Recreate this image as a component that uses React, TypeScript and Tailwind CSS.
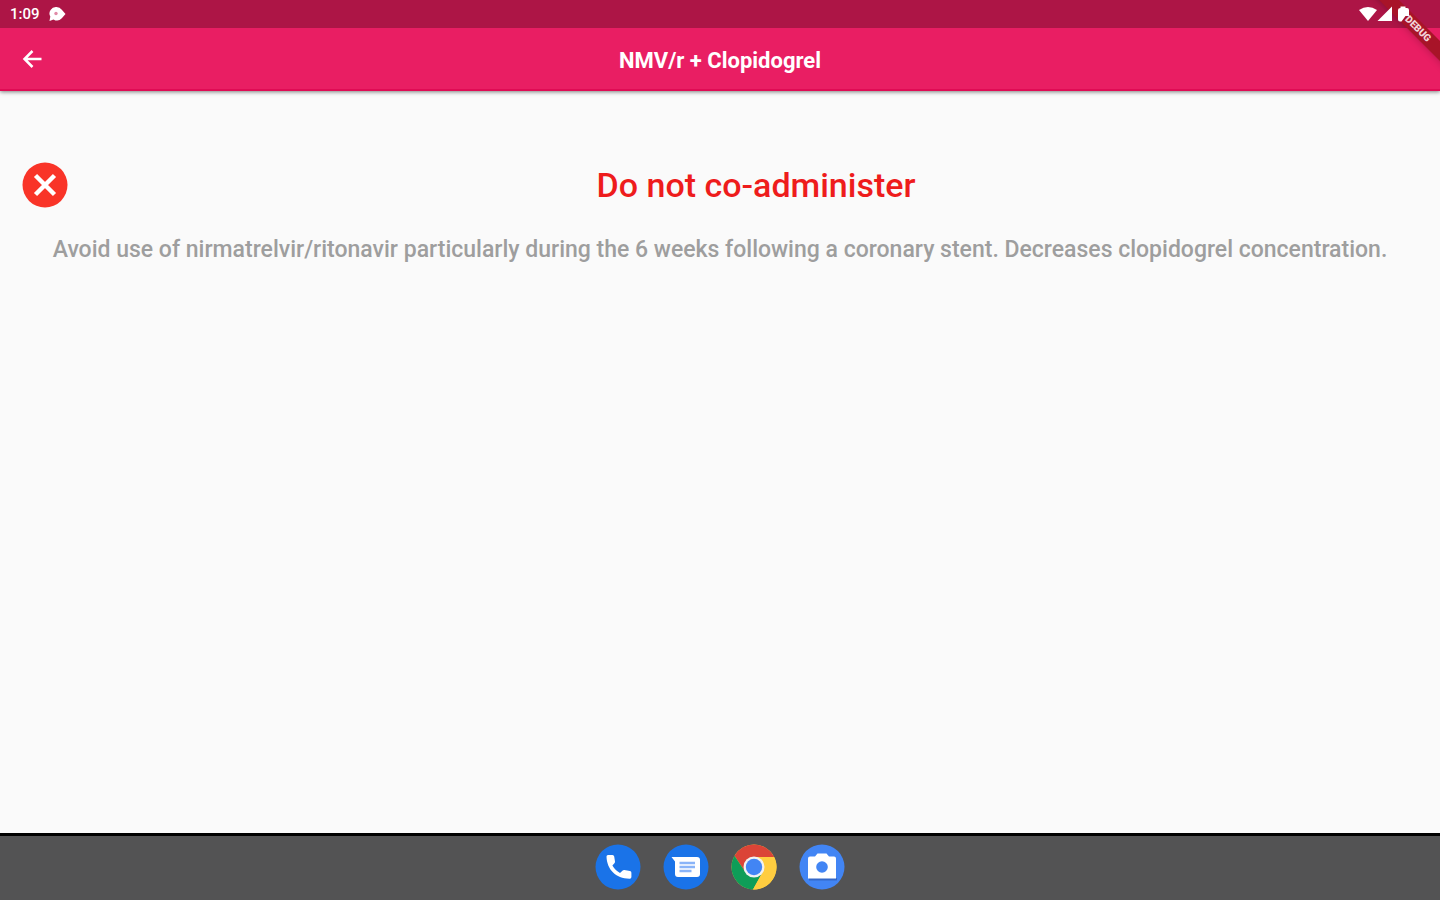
import React from "react";

interface DockApp {
  name: string;
  icon: React.ReactNode;
}

function NotificationIcon() {
  return (
    <svg viewBox="0 0 18 16" className="w-[18px] h-4" aria-hidden="true">
      <path d="M8.500 1a6.500 6.500 0 0 1 5.300 2.800L17.500 8l-3.700 4.200A6.500 6.500 0 0 1 5.500 13.400L1.500 15l.8-4.400A6.500 6.500 0 0 1 8.500 1Z" fill="#fff" />
      <circle cx="8" cy="7.500" r="1.700" fill="#e08aa6" />
    </svg>
  );
}

function StatusIcons() {
  return (
    <svg viewBox="0 0 52 18" className="relative z-10 w-[52px] h-[18px]" aria-hidden="true">
      <path d="M0 5Q9 -1 18 5L9 16Z" fill="#fff" />
      <path d="M33 1.500V16H18.500Z" fill="#fff" />
      <path d="M41.500 1.500h5V3h1.500q2 0 2 2v6h-3.500l-4 5.500h-1.500q-2 0-2-2V5q0-2 2.500-2Z" fill="#fff" />
    </svg>
  );
}

function ErrorIcon() {
  return (
    <svg viewBox="0 0 46 46" className="w-[46px] h-[46px] shrink-0" aria-hidden="true">
      <circle cx="23" cy="23" r="22.500" fill="#f93428" />
      <path d="M13.500 13.500l19 19M32.500 13.500l-19 19" stroke="#fff" strokeWidth="4.500" />
    </svg>
  );
}

const dockApps: DockApp[] = [
  {
    name: "Phone",
    icon: (
      <>
        <circle cx="23" cy="23" r="22.500" fill="#1a73e8" />
        <path
          d="M11.500 12.500q0-1.500 1.500-1.500h4.500q1.500 0 1.700 1.500l.8 5q.1 1-.6 1.700l-2 2.400q3 5.200 7.600 7.300l2.700-2.400q.7-.7 1.700-.5l5.500 1q1.500.3 1.500 1.800v4.300q0 1.800-1.800 1.700C20.500 34.400 12 25.500 11.500 12.500Z"
          fill="#fff"
        />
      </>
    ),
  },
  {
    name: "Messages",
    icon: (
      <>
        <circle cx="23" cy="23" r="22.500" fill="#1a73e8" />
        <path d="M8.500 13h25.500q3 0 3 3v14q0 3-3 3H15q-3 0-3-3V17.500Z" fill="#fff" />
        <path d="M16.500 19h15.500M16.500 23h15.500M16.500 27h12" stroke="#8ab4f8" strokeWidth="2.500" />
      </>
    ),
  },
  {
    name: "Chrome",
    icon: (
      <>
        <circle cx="23" cy="23" r="22.500" fill="#ffcd40" />
        <path d="M23 23V13H43.200A22.500 22.500 0 0 0 3.500 11.800L14.300 28Z" fill="#db4437" />
        <path d="M3.500 11.800A22.500 22.500 0 0 0 22 45.500L31.700 28L23 23L14.300 28Z" fill="#0f9d58" />
        <path d="M23 13H43.200A22.500 22.500 0 0 1 22 45.500L31.700 28Z" fill="#ffcd40" />
        <circle cx="23" cy="23" r="10.500" fill="#f1f1f1" />
        <circle cx="23" cy="23" r="8.200" fill="#4285f4" />
      </>
    ),
  },
  {
    name: "Camera",
    icon: (
      <>
        <circle cx="23" cy="23" r="22.500" fill="#4285f4" />
        <path d="M10 34h28v2.500H10Z" fill="#3568c8" />
        <path d="M11 12.500h5l2.500-3h9l2.500 3h5q2 0 2 2V34.500H9V14.500q0-2 2-2Z" fill="#fff" />
        <circle cx="23" cy="23" r="5.800" fill="#4285f4" />
      </>
    ),
  },
];

function StatusBar() {
  return (
    <div className="h-7 bg-[#ad1546] flex items-center justify-between pl-[10px] pr-[29px] text-white">
      <div className="flex items-center gap-2">
        <span className="text-[15px] leading-5 font-medium">1:09</span>
        <NotificationIcon />
      </div>
      <StatusIcons />
    </div>
  );
}

function DebugBanner() {
  return (
    <div className="absolute top-0 right-0 w-20 h-20 overflow-hidden pointer-events-none">
      <div className="absolute -right-[38px] top-[22px] w-30 h-[14px] rotate-45 bg-[#a81428] shadow-md flex items-center justify-center">
        <span className="text-[10px] leading-none font-black text-[#f4d5da]">DEBUG</span>
      </div>
    </div>
  );
}

export default function App() {
  return (
    <div className="relative min-h-screen flex flex-col bg-[#fafafa] font-['Roboto',sans-serif] overflow-hidden">
      <header className="bg-[#e91e63] shadow-[0_1px_4px_rgba(0,0,0,0.5)]">
        <StatusBar />
        <div className="h-[63px] grid grid-cols-[64px_1fr_64px] items-center border-b-2 border-[#e00b54] text-white">
          <button type="button" aria-label="Back" className="h-full flex items-center justify-center cursor-pointer">
            <svg viewBox="0 0 20 20" className="w-5 h-5" aria-hidden="true">
              <path d="M19.500 10H3M10.500 2L2.500 10L10.500 18" fill="none" stroke="#fff" strokeWidth="2.500" />
            </svg>
          </button>
          <h1 className="pt-1 text-center text-[22px] leading-8 font-bold">NMV/r + Clopidogrel</h1>
        </div>
      </header>

      {/* Interaction result */}
      <main className="flex-1 px-[22px] pt-[71px]">
        <div className="flex items-center">
          <ErrorIcon />
          <h2 className="flex-1 pl-[26px] text-center text-[34px] leading-[46px] font-medium text-[#ee1c1c]">
            Do not co-administer
          </h2>
        </div>
        <p className="mt-[26px] text-center text-[23px] leading-8 font-medium text-[#9e9e9e]">
          Avoid use of nirmatrelvir/ritonavir particularly during the 6 weeks following a coronary stent. Decreases
          clopidogrel concentration.
        </p>
      </main>

      {/* Tablet dock */}
      <nav aria-label="Dock" className="h-[67px] border-t-3 border-black bg-[#535354] flex items-start justify-center gap-[22px] pt-2">
        {dockApps.map((app) => (
          <button key={app.name} type="button" aria-label={app.name} className="cursor-pointer">
            <svg viewBox="0 0 46 46" className="block w-[46px] h-[46px]" aria-hidden="true">
              {app.icon}
            </svg>
          </button>
        ))}
      </nav>

      <DebugBanner />
    </div>
  );
}
